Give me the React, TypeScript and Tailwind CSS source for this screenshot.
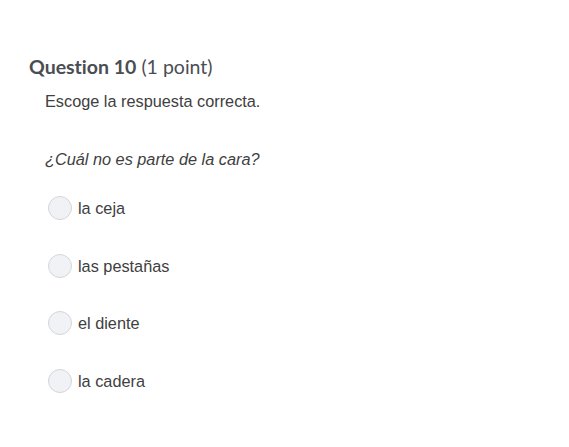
export default function App() {
  const options = ["la ceja", "las pestañas", "el diente", "la cadera"];
  return (
    <div className="w-[569px] h-[447px] bg-white relative overflow-hidden">
      <div className="pt-[53px] pl-[29px]">
        <h2 className="text-[19.5px] leading-[28px] text-[#4a4d52] font-['Lato',sans-serif] [font-variant-ligatures:none]">
          <span className="font-bold">Question 10</span> <span>(1 point)</span>
        </h2>
        <div className="pl-[16px] font-['Liberation_Sans',Arial,sans-serif] text-[#404040]">
          <p className="mt-[10px] text-[16.3px] leading-[20px]">Escoge la respuesta correcta.</p>
          <p className="mt-[38px] text-[16.3px] leading-[20px] italic">¿Cuál no es parte de la cara?</p>
          <div className="mt-[27px] flex flex-col gap-[33.5px]">
            {options.map((o) => (
              <label key={o} className="flex items-center gap-[6px] h-[24px]">
                <span className="w-[24px] h-[24px] rounded-full border border-[#d3d5d9] bg-[#f1f2f5] shrink-0 ml-[3px]" />
                <span className="text-[16.3px] leading-[20px]">{o}</span>
              </label>
            ))}
          </div>
        </div>
      </div>
    </div>
  );
}
